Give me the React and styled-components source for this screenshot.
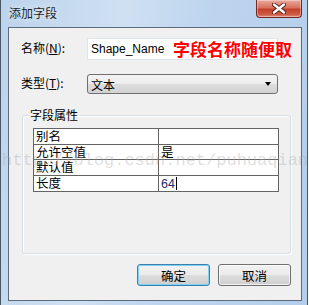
import React from 'react'
import styled, { createGlobalStyle } from 'styled-components'

const GlobalStyle = createGlobalStyle`
	html, body {
		margin: 0;
		padding: 0;
		background: #ffffff;
	}
	body {
		font-family: "Noto Sans CJK SC", "DejaVu Sans", sans-serif;
		font-size: 12px;
		color: #000;
	}
`

const Window = styled.div`
	position: relative;
	box-sizing: border-box;
	width: 308px;
	height: 305px;
	display: flex;
	flex-direction: column;
	border-left: 1px solid #4a5766;
	border-right: 1px solid #4a5766;
	background: linear-gradient(100deg, #bcd3ec 0%, #cfe0f2 35%, #bcd4ee 60%, #b4cdea 100%);
	overflow: hidden;
`

const TitleBar = styled.div`
	height: 27px;
	flex: none;
	display: flex;
	justify-content: space-between;
	align-items: flex-start;
	padding-left: 8px;
	padding-right: 5px;
`

const Title = styled.span`
	margin-top: 5px;
	font-size: 12px;
	line-height: 16px;
	color: #1e1e1e;
	text-shadow: 0 0 6px rgba(255, 255, 255, 0.9);
`

const CloseButton = styled.div`
	width: 46px;
	height: 18px;
	box-sizing: border-box;
	display: flex;
	align-items: center;
	justify-content: center;
	border: 1px solid #6d2b24;
	border-top: none;
	border-radius: 0 0 4px 4px;
	background: linear-gradient(180deg, #e9a99b 0%, #d8735f 45%, #c2402b 55%, #d05a44 85%, #e3907d 100%);
	box-shadow: inset 0 0 0 1px rgba(255, 255, 255, 0.35);
`

const Client = styled.div`
	flex: 1;
	margin: 0 5px 4px 7px;
	border: 1px solid #5c6b7c;
	background: #f0f0f0;
	display: flex;
	flex-direction: column;
	padding: 10px 0 0 12px;
`

const FieldGrid = styled.div`
	display: grid;
	grid-template-columns: 66px 191px;
	grid-template-rows: 22px 20px;
	row-gap: 14px;
	align-items: center;
`

const Label = styled.label`
	font-size: 12px;
	line-height: 16px;
	margin-top: -2px;
	u {
		text-decoration: underline;
	}
`

const InputWrap = styled.div`
	position: relative;
	height: 100%;
`

const TextInput = styled.div`
	box-sizing: border-box;
	height: 22px;
	border: 1px solid #dde4ea;
	background: #ffffff;
	padding-left: 3px;
	font-family: "Liberation Sans", Arial, sans-serif;
	font-size: 12px;
	line-height: 20px;
	color: #000;
`

const Note = styled.span`
	position: absolute;
	left: 86px;
	top: 1px;
	font-size: 17px;
	font-weight: bold;
	line-height: 20px;
	color: #ff0000;
	white-space: nowrap;
`

const Select = styled.div`
	box-sizing: border-box;
	height: 20px;
	display: flex;
	align-items: center;
	justify-content: space-between;
	border: 1px solid #707070;
	border-radius: 3px;
	background: linear-gradient(180deg, #f3f3f3 0%, #ececec 48%, #dddddd 52%, #d2d2d2 100%);
	padding: 0 6px 0 3px;
	font-size: 12px;
`

const Arrow = styled.span`
	width: 0;
	height: 0;
	border-left: 3.5px solid transparent;
	border-right: 3.5px solid transparent;
	border-top: 4px solid #000;
`

const Group = styled.fieldset`
	box-sizing: border-box;
	width: 269px;
	height: 147px;
	margin: 13px 0 0 1px;
	padding: 0 10px;
	border: 1px solid #d5dfe5;
	border-radius: 3px;
	box-shadow: inset 1px 1px 0 #ffffff, 1px 1px 0 #ffffff;
	min-width: 0;
`

const Legend = styled.legend`
	margin-left: -4px;
	padding: 0 1px;
	font-size: 12px;
	line-height: 16px;
`

const PropTable = styled.table`
	margin-top: 5px;
	width: 246px;
	border-collapse: collapse;
	background: #ffffff;
	table-layout: fixed;
`

const Cell = styled.td`
	height: 14.5px;
	padding: 0 0 0 2px;
	border: 1px solid #646464;
	font-size: 12.5px;
	line-height: 14px;
	white-space: nowrap;
	vertical-align: middle;
	width: ${p => p.$w || 'auto'};
`

const Caret = styled.span`
	display: inline-block;
	width: 1px;
	height: 13px;
	background: #000;
	vertical-align: -2px;
	margin-left: 1px;
`

const Digits = styled.span`
	font-family: "Liberation Sans", Arial, sans-serif;
	color: #1a2e6a;
`

const ButtonRow = styled.div`
	display: flex;
	justify-content: flex-end;
	gap: 8px;
	margin-top: 10px;
	padding-right: 10px;
`

const Button = styled.div`
	box-sizing: border-box;
	width: 73px;
	height: 22px;
	display: flex;
	align-items: center;
	justify-content: center;
	border-radius: 3px;
	border: 1px solid ${p => (p.$primary ? '#3c7fb1' : '#707070')};
	background: linear-gradient(180deg, #f2f2f2 0%, #ebebeb 48%, #dddddd 52%, #cfcfcf 100%);
	box-shadow: inset 0 0 0 1px ${p => (p.$primary ? '#7fd0f5' : 'rgba(255,255,255,0.7)')};
	font-size: 12.5px;
`

const Watermark = styled.div`
	position: absolute;
	left: 1px;
	top: 151px;
	font-family: "Liberation Mono", "Courier New", monospace;
	font-size: 17px;
	line-height: 20px;
	color: rgba(170, 170, 170, 0.38);
	white-space: nowrap;
	pointer-events: none;
`

function CloseIcon() {
	return (
		<svg width="14" height="11" viewBox="0 0 14 11">
			<path d="M2 1.5 L12 9.5 M12 1.5 L2 9.5" stroke="#5a1d15" strokeWidth="4.2" strokeLinecap="round" />
			<path d="M2 1.5 L12 9.5 M12 1.5 L2 9.5" stroke="#ffffff" strokeWidth="2.4" strokeLinecap="round" />
		</svg>
	)
}

const rows = [
	{ name: '别名', value: '' },
	{ name: '允许空值', value: '是' },
	{ name: '默认值', value: '' },
	{ name: '长度', value: '64', editing: true },
]

export default function App() {
	return (
		<>
			<GlobalStyle />
			<Window>
				<TitleBar>
					<Title>添加字段</Title>
					<CloseButton><CloseIcon /></CloseButton>
				</TitleBar>
				<Client>
					<FieldGrid>
						<Label>名称(<u>N</u>):</Label>
						<InputWrap>
							<TextInput>Shape_Name</TextInput>
							<Note>字段名称随便取</Note>
						</InputWrap>
						<Label>类型(<u>T</u>):</Label>
						<Select>
							<span>文本</span>
							<Arrow />
						</Select>
					</FieldGrid>

					<Group>
						<Legend>字段属性</Legend>
						<PropTable>
							<tbody>
								{rows.map((row, index) => (
									<tr key={index}>
										<Cell $w="122px">{row.name}</Cell>
										<Cell>
											{row.editing ? <><Digits>{row.value}</Digits><Caret /></> : row.value}
										</Cell>
									</tr>
								))}
							</tbody>
						</PropTable>
					</Group>

					<ButtonRow>
						<Button $primary>确定</Button>
						<Button>取消</Button>
					</ButtonRow>
				</Client>
				<Watermark>http://blog.csdn.net/puhuaqian</Watermark>
			</Window>
		</>
	)
}
